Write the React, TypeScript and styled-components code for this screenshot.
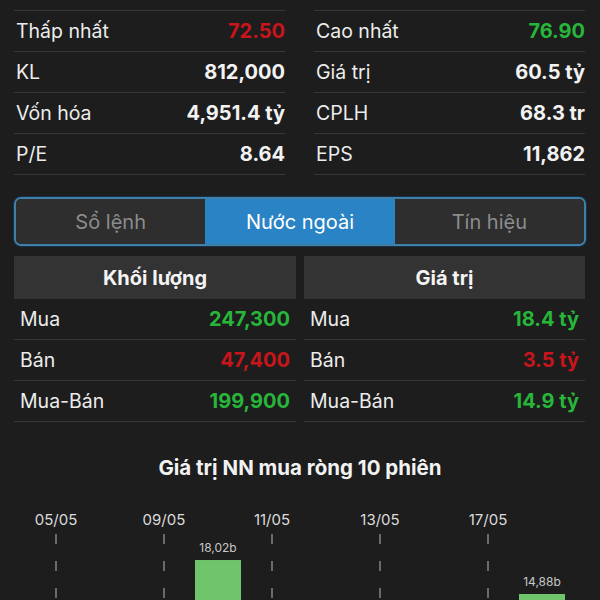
import React from 'react';
import styled, { createGlobalStyle } from 'styled-components';

const GlobalStyle = createGlobalStyle`
  html, body {
    margin: 0;
    padding: 0;
    background: #1d1d1d;
  }
  body {
    font-family: Inter, 'Noto Sans', 'Liberation Sans', sans-serif;
    color: #ececec;
  }
`;

const Page = styled.div`
  padding: 10px 14px 0;
`;

const StatsGrid = styled.div`
  display: grid;
  grid-template-columns: 271px 271px;
  column-gap: 29px;
`;

const StatsColumn = styled.div`
  border-top: 1px solid #363636;
`;

const StatRow = styled.div`
  display: flex;
  align-items: center;
  justify-content: space-between;
  height: 40px;
  border-bottom: 1px solid #363636;
  font-size: 19.5px;
`;

const Label = styled.span`
  color: #ececec;
  padding-left: 2px;
`;

type Tone = 'up' | 'down' | 'plain';

const toneColor = (tone: Tone) =>
  tone === 'up' ? '#27b53a' : tone === 'down' ? '#c8151c' : '#f2f2f2';

const Value = styled.span<{ $tone: Tone }>`
  font-weight: 700;
  font-size: 20px;
  color: ${(p) => toneColor(p.$tone)};
`;

const Tabs = styled.div`
  margin-top: 22px;
  display: grid;
  grid-template-columns: 1fr 1fr 1fr;
  height: 45px;
  border: 2px solid #3f7fa8;
  border-radius: 7px;
  overflow: hidden;
  box-shadow: 0 0 0 1px #15324a;
`;

const Tab = styled.div<{ $active?: boolean }>`
  display: flex;
  align-items: center;
  justify-content: center;
  font-size: 20px;
  background: ${(p) => (p.$active ? '#2a83c4' : '#2e2e2e')};
  color: ${(p) => (p.$active ? '#ffffff' : '#8c8c8c')};
`;

const ForeignGrid = styled.div`
  margin-top: 10px;
  display: grid;
  grid-template-columns: 282px 281px;
  column-gap: 8px;
`;

const Header = styled.div`
  height: 43px;
  background: #333333;
  display: flex;
  align-items: center;
  justify-content: center;
  font-size: 20px;
  font-weight: 700;
  color: #f4f4f4;
`;

const ForeignRow = styled.div`
  display: flex;
  align-items: center;
  justify-content: space-between;
  height: 40px;
  padding: 0 6px;
  border-bottom: 1px solid #363636;
  font-size: 19.5px;
  &:first-of-type {
    margin-top: 3px;
  }
`;

const ChartTitle = styled.div`
  margin-top: 33px;
  text-align: center;
  font-size: 20.5px;
  font-weight: 700;
  color: #f2f2f2;
`;

const ChartWrap = styled.div`
  margin: 18px -14px 0;
  svg {
    display: block;
  }
`;

const leftStats: [string, string, Tone][] = [
  ['Thấp nhất', '72.50', 'down'],
  ['KL', '812,000', 'plain'],
  ['Vốn hóa', '4,951.4 tỷ', 'plain'],
  ['P/E', '8.64', 'plain'],
];

const rightStats: [string, string, Tone][] = [
  ['Cao nhất', '76.90', 'up'],
  ['Giá trị', '60.5 tỷ', 'plain'],
  ['CPLH', '68.3 tr', 'plain'],
  ['EPS', '11,862', 'plain'],
];

const volumeRows: [string, string, Tone][] = [
  ['Mua', '247,300', 'up'],
  ['Bán', '47,400', 'down'],
  ['Mua-Bán', '199,900', 'up'],
];

const valueRows: [string, string, Tone][] = [
  ['Mua', '18.4 tỷ', 'up'],
  ['Bán', '3.5 tỷ', 'down'],
  ['Mua-Bán', '14.9 tỷ', 'up'],
];

// 10 sessions, a date label on every second one
const sessions: { date?: string; value?: number; label?: string }[] = [
  { date: '05/05' },
  {},
  { date: '09/05' },
  { value: 18.02, label: '18,02b' },
  { date: '11/05' },
  {},
  { date: '13/05' },
  {},
  { date: '17/05' },
  { value: 14.88, label: '14,88b' },
];

const ZERO_Y = 257;
const PX_PER_B = 10.82;

const NetBuyChart = () => (
  <svg width={600} height={110} viewBox="0 0 600 110">
    {sessions.map((s, i) => {
      const cx = 56 + i * 54;
      if (s.date) {
        return (
          <g key={i}>
            <text
              x={cx}
              y={27}
              textAnchor="middle"
              fontSize={15}
              fill="#dcdcdc"
              fontFamily="Inter, 'Noto Sans', sans-serif"
            >
              {s.date}
            </text>
            <line
              x1={cx}
              x2={cx}
              y1={36}
              y2={110}
              stroke="#6a6a6a"
              strokeWidth={2}
              strokeDasharray="10 17"
            />
          </g>
        );
      }
      if (s.value !== undefined) {
        const top = ZERO_Y - s.value * PX_PER_B;
        return (
          <g key={i}>
            <text
              x={cx}
              y={top - 8}
              textAnchor="middle"
              fontSize={12}
              fill="#c8c8c8"
              fontFamily="Inter, 'Noto Sans', sans-serif"
            >
              {s.label}
            </text>
            <rect x={cx - 23} y={top} width={46} height={ZERO_Y - top} fill="#70c56c" />
          </g>
        );
      }
      return null;
    })}
  </svg>
);

const App = () => (
  <>
    <GlobalStyle />
    <Page>
      <StatsGrid>
        <StatsColumn>
          {leftStats.map(([l, v, t]) => (
            <StatRow key={l}>
              <Label>{l}</Label>
              <Value $tone={t}>{v}</Value>
            </StatRow>
          ))}
        </StatsColumn>
        <StatsColumn>
          {rightStats.map(([l, v, t]) => (
            <StatRow key={l}>
              <Label>{l}</Label>
              <Value $tone={t}>{v}</Value>
            </StatRow>
          ))}
        </StatsColumn>
      </StatsGrid>

      <Tabs>
        <Tab>Sổ lệnh</Tab>
        <Tab $active>Nước ngoài</Tab>
        <Tab>Tín hiệu</Tab>
      </Tabs>

      <ForeignGrid>
        <div>
          <Header>Khối lượng</Header>
          {volumeRows.map(([l, v, t]) => (
            <ForeignRow key={l}>
              <span>{l}</span>
              <Value $tone={t}>{v}</Value>
            </ForeignRow>
          ))}
        </div>
        <div>
          <Header>Giá trị</Header>
          {valueRows.map(([l, v, t]) => (
            <ForeignRow key={l}>
              <span>{l}</span>
              <Value $tone={t}>{v}</Value>
            </ForeignRow>
          ))}
        </div>
      </ForeignGrid>

      <ChartTitle>Giá trị NN mua ròng 10 phiên</ChartTitle>
      <ChartWrap>
        <NetBuyChart />
      </ChartWrap>
    </Page>
  </>
);

export default App;
